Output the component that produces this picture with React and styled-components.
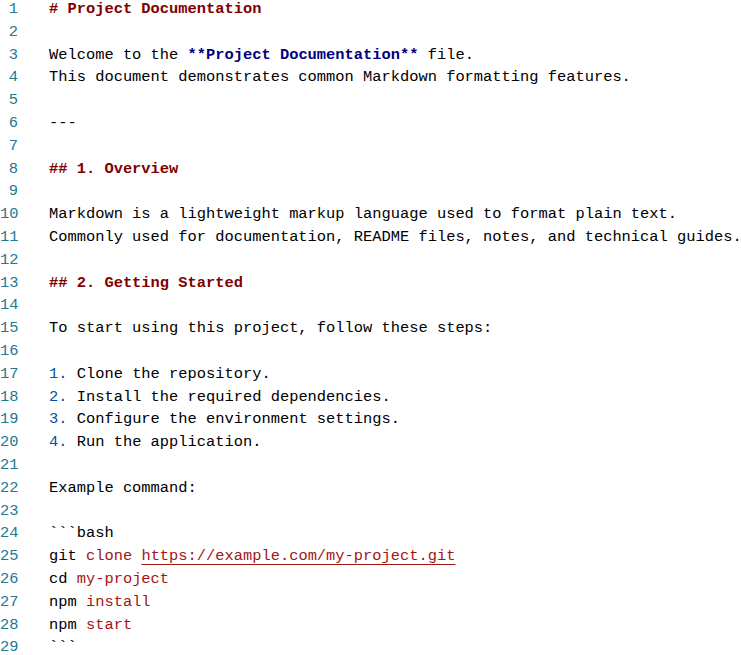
import React from 'react';
import styled, { createGlobalStyle } from 'styled-components';

const Global = createGlobalStyle`
  html, body {
    margin: 0;
    padding: 0;
    background: #fff;
    overflow: hidden;
  }
`;

const Editor = styled.div`
  font-family: "Liberation Mono", "DejaVu Sans Mono", monospace;
  font-size: 15.4px;
  line-height: 22.8px;
  color: #000;
  margin-top: -2px;
  white-space: pre;
`;

const Line = styled.div`
  display: flex;
  height: 22.8px;
`;

const Num = styled.span`
  width: 18px;
  text-align: right;
  color: #237893;
  padding-right: 31px;
  flex: none;
`;

const Code = styled.span`
  flex: 1;
`;

const Heading = styled.span`
  color: #800000;
  font-weight: 700;
`;

const Strong = styled.span`
  color: #000080;
  font-weight: 700;
`;

const ListMark = styled.span`
  color: #0451a5;
`;

const Arg = styled.span`
  color: #a31515;
`;

const Url = styled(Arg)`
  text-decoration: underline;
  text-decoration-color: #a31515;
  text-underline-offset: 4px;
`;

const lines = [
  <Heading># Project Documentation</Heading>,
  '',
  <>Welcome to the <Strong>**Project Documentation**</Strong> file.</>,
  'This document demonstrates common Markdown formatting features.',
  '',
  '---',
  '',
  <Heading>## 1. Overview</Heading>,
  '',
  'Markdown is a lightweight markup language used to format plain text.',
  'Commonly used for documentation, README files, notes, and technical guides.',
  '',
  <Heading>## 2. Getting Started</Heading>,
  '',
  'To start using this project, follow these steps:',
  '',
  <><ListMark>1.</ListMark> Clone the repository.</>,
  <><ListMark>2.</ListMark> Install the required dependencies.</>,
  <><ListMark>3.</ListMark> Configure the environment settings.</>,
  <><ListMark>4.</ListMark> Run the application.</>,
  '',
  'Example command:',
  '',
  '```bash',
  <>git <Arg>clone</Arg> <Url>https://example.com/my-project.git</Url></>,
  <>cd <Arg>my-project</Arg></>,
  <>npm <Arg>install</Arg></>,
  <>npm <Arg>start</Arg></>,
  '```',
];

export default function App() {
  return (
    <>
      <Global />
      <Editor>
        {lines.map((content, i) => (
          <Line key={i}>
            <Num>{i + 1}</Num>
            <Code>{content}</Code>
          </Line>
        ))}
      </Editor>
    </>
  );
}
